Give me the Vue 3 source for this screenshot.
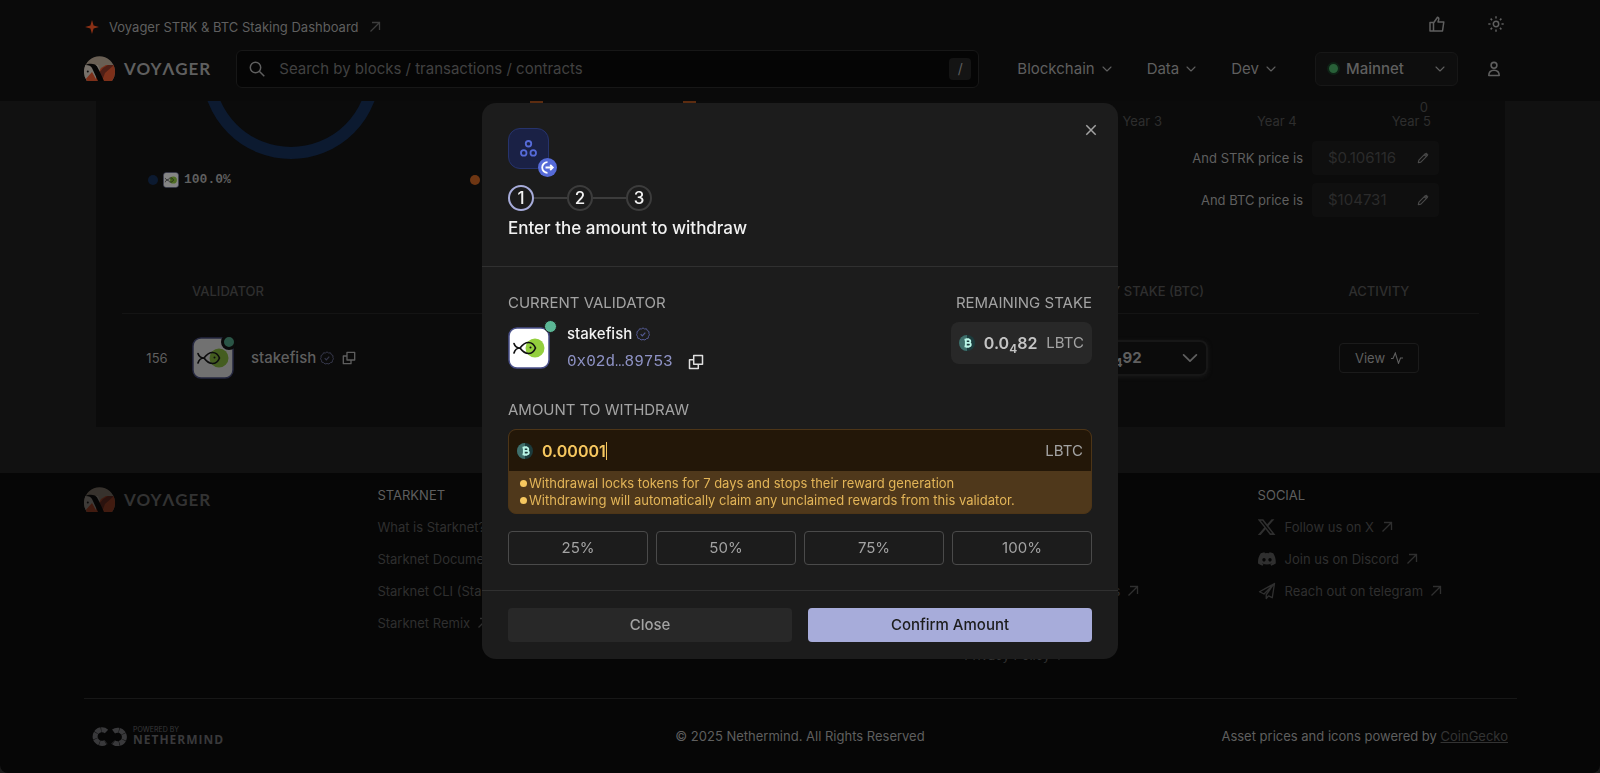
<script setup>
import { ref } from 'vue'

const search = ref('')
const network = ref('Mainnet')
const strkPrice = ref('$0.106116')
const btcPrice = ref('$104731')
const amount = ref('0.00001')
const showModal = ref(true)

const remaining = 0.000082

const menus = ['Blockchain', 'Data', 'Dev']
const years = ['Year 2', 'Year 3', 'Year 4', 'Year 5']
const steps = [1, 2, 3]
const percents = [25, 50, 75, 100]

const columns = [
  {
    title: 'STARKNET',
    links: ['What is Starknet?', 'Starknet Documentation', 'Starknet CLI (Starkli)', 'Starknet Remix'],
  },
  { title: 'VOYAGER', links: ['About us', 'Roadmap', 'Changelog', 'Contact'] },
  { title: 'RESOURCES', links: ['API', 'Verify', 'Starknet Token Contracts', 'Brand', 'Privacy Policy'] },
]

const socials = [
  { icon: '#i-x', text: 'Follow us on X' },
  { icon: '#i-discord', text: 'Join us on Discord' },
  { icon: '#i-telegram', text: 'Reach out on telegram' },
]

// fill the amount with a part of the stake that is left
const setPercent = (p) => {
  amount.value = String((remaining * p) / 100)
}
</script>

<template>
  <!-- all the icons that are used more than once -->
  <svg class="sprite" aria-hidden="true">
    <symbol id="i-arrow" viewBox="0 0 12 12">
      <path d="M1.5 10.5 10.3 1.7M3 1.5h7.5V9" fill="none" stroke="currentColor" stroke-width="1.3" />
    </symbol>
    <symbol id="i-down" viewBox="0 0 12 12">
      <path d="M1.2 3.6 6 8.4l4.8-4.8" fill="none" stroke="currentColor" stroke-width="1.3" stroke-linecap="round" stroke-linejoin="round" />
    </symbol>
    <symbol id="i-copy" viewBox="0 0 16 16">
      <path d="M5.7 1.5h8.8v8.8H5.7zM5.5 5.7h-4v8.8h8.8v-4" fill="none" stroke="currentColor" stroke-width="1.5" stroke-linejoin="round" />
    </symbol>
    <symbol id="i-check" viewBox="0 0 14 14">
      <path d="M7 .9 8.6 2l1.9-.2.8 1.8 1.7 1-.1 1.9.6 1.3-1 1.5-.3 1.9-1.9.5L9 13l-2-.5L5 13l-1.3-1.3-1.9-.5-.3-1.9-1-1.5.6-1.3L1 4.6l1.7-1 .8-1.8 1.9.2z" fill="none" stroke="currentColor" stroke-width="1" />
      <path d="m4.7 7.2 1.6 1.6 3-3.2" fill="none" stroke="currentColor" stroke-width="1.2" />
    </symbol>
    <symbol id="i-fish" viewBox="0 0 42 42">
      <rect x="1" y="1" width="40" height="40" rx="8" fill="#fff" stroke="#4a508a" stroke-width="1.5" />
      <circle cx="27" cy="21" r="9.5" fill="#93cf3d" />
      <path d="M6 16.5c1 3 3 4.5 6 4.5 3-4 6-5.5 8.5-5.5 3.5 0 6 3 7 5.5-1 2.5-3.5 5.5-7 5.500-2.5 0-5.5-1.5-8.5-5.500-3 0-5 1.5-6 5" fill="none" stroke="#111" stroke-width="1.7" stroke-linecap="round" stroke-linejoin="round" />
      <circle cx="22.5" cy="20.5" r="1" fill="#111" />
    </symbol>
    <symbol id="i-btc" viewBox="0 0 16 16">
      <circle cx="8" cy="8" r="8" fill="#1c3b3c" />
      <path d="M8 0a8 8 0 0 0 0 16z" fill="#3f6f6b" />
      <path d="M5.5 4.7h4.2a1.6 1.6 0 0 1 0 3.2H6.8h3.3a1.7 1.7 0 0 1 0 3.4H5.5M6.8 4.7v6.6M7.6 3.2v1.5M9.4 3.2v1.5M7.6 11.3v1.5M9.4 11.3v1.5" fill="none" stroke="#b9f5e6" stroke-width="1.8" />
    </symbol>
    <symbol id="i-pencil" viewBox="0 0 14 14">
      <path d="M1.5 12.5 2.2 9.5 9.7 2 12 4.3 4.5 11.8zM8.5 3.2l2.3 2.3" fill="none" stroke="currentColor" stroke-width="1.3" stroke-linejoin="round" />
      <path d="M10 2.2 11 1.3l1.8 1.8-1 1z" fill="currentColor" stroke="currentColor" />
    </symbol>
    <symbol id="i-voyager" viewBox="0 0 31 25">
      <clipPath id="disc"><path d="M3 25A15.5 15.5 0 1 1 28 25z" /></clipPath>
      <g clip-path="url(#disc)">
        <rect width="31" height="25" fill="#695f54" />
        <path d="M0 9h14l6 16H0z" fill="#77716a" />
        <path d="M0 25 8 16l5 9z" fill="#7d301a" />
        <path d="m12 21 5-9 5-3h9v16H12z" fill="#7d301a" />
        <path d="m15 17 4-5 5-3h6l-9 8-3 8z" fill="#4e1f16" />
        <path d="M1.5 9C4 7.5 8 7.3 11 8.5c3 2 4 6 6.5 11L20 25h-6L8 12C7 10 5 9 1.5 9z" fill="#050505" />
        <circle cx="3.8" cy="15.5" r="1" fill="#111" />
      </g>
    </symbol>
    <symbol id="i-x" viewBox="0 0 24 24">
      <path fill="currentColor" d="M18.2 1.5h3.7l-8 9.2L23.3 22.5h-7.4l-5.8-7.6-6.6 7.6H-.2l8.6-9.8L-.6 1.5H7l5.2 6.9zm-1.3 18.900h2L5.8 3.5H3.6z" />
    </symbol>
    <symbol id="i-discord" viewBox="0 0 24 24">
      <path fill="currentColor" d="M20.3 4.4A19.8 19.8 0 0 0 15.4 2.9l-.7 1.3a18.3 18.3 0 0 0-5.5 0l-.6-1.3a19.7 19.7 0 0 0-4.9 1.5C.5 9-.3 13.6.1 18.1a19.9 19.9 0 0 0 6 3l1.2-2-1.9-.9.4-.3c3.9 1.8 8.2 1.8 12.1 0l.4.3-1.9.9 1.2 2a19.8 19.8 0 0 0 6-3c.5-5.2-.8-9.7-3.3-13.7zM8 15.3c-1.2 0-2.2-1.1-2.2-2.4S6.8 10.5 8 10.5s2.2 1.1 2.2 2.4S9.2 15.3 8 15.3zm8 0c-1.2 0-2.2-1.1-2.2-2.4s1-2.4 2.2-2.4 2.2 1.1 2.2 2.4-1 2.4-2.2 2.4z" />
    </symbol>
    <symbol id="i-telegram" viewBox="0 0 24 24">
      <path d="M22 2 2 13l6 3 12-12L11 17v5l3-3.5 5 2.5z" fill="none" stroke="currentColor" stroke-width="1.8" stroke-linejoin="round" />
    </symbol>
  </svg>

  <div class="page">
    <header class="header">
      <div class="top-row">
        <a href="#" class="promo">
          <svg width="14" height="14" viewBox="0 0 14 14"><path d="M7 0 8.6 5.4 14 7 8.6 8.6 7 14 5.4 8.6 0 7 5.4 5.4z" fill="#8a3015" /></svg>
          <span>Voyager STRK &amp; BTC Staking Dashboard</span>
          <svg class="dim" width="12" height="12"><use href="#i-arrow" /></svg>
        </a>
        <div class="top-icons">
          <button type="button" aria-label="Feedback">
            <svg width="16" height="16" viewBox="0 0 16 16" fill="none" stroke="currentColor" stroke-width="1.5" stroke-linejoin="round">
              <path d="M1 6.5h3.5V15H1zM4.5 7 8.5 1.2c1.3.5 1.5 1.4 1.2 2.4L9 6h5.8L13.5 15h-9" />
            </svg>
          </button>
          <button type="button" aria-label="Theme">
            <svg width="16" height="16" viewBox="0 0 16 16" fill="none" stroke="currentColor" stroke-width="1.5">
              <circle cx="8" cy="8" r="2.7" />
              <path d="M8 .3v2.2M8 13.5v2.2M.3 8h2.2M13.5 8h2.2M2.6 2.6l1.5 1.5M11.9 11.9l1.5 1.5M2.6 13.4l1.5-1.5M11.9 4.1l1.5-1.5" />
            </svg>
          </button>
        </div>
      </div>
      <div class="nav-row">
        <a href="#" class="logo" aria-label="Voyager">
          <svg width="31" height="25"><use href="#i-voyager" /></svg>
          <span>VOYΛGER</span>
        </a>
        <label class="search">
          <svg width="16" height="16" viewBox="0 0 16 16" fill="none" stroke="currentColor" stroke-width="1.5">
            <circle cx="6.5" cy="6.5" r="5.2" />
            <path d="m10.3 10.3 5 5" />
          </svg>
          <input v-model="search" type="text" placeholder="Search by blocks / transactions / contracts" />
          <kbd>/</kbd>
        </label>
        <nav class="menus">
          <button v-for="menu in menus" :key="menu" type="button">
            {{ menu }}
            <svg width="10" height="10"><use href="#i-down" /></svg>
          </button>
        </nav>
        <label class="network">
          <span class="network-dot"></span>
          <select v-model="network" aria-label="Network">
            <option>Mainnet</option>
            <option>Sepolia</option>
          </select>
          <svg width="10" height="10"><use href="#i-down" /></svg>
        </label>
        <button type="button" class="account" aria-label="Account">
          <svg width="14" height="16" viewBox="0 0 14 16" fill="none" stroke="currentColor" stroke-width="1.6">
            <circle cx="7" cy="4.3" r="2.9" />
            <path d="M1.8 14.5c0-3.6 1.7-5.3 5.2-5.3s5.2 1.7 5.2 5.3z" stroke-linejoin="round" />
          </svg>
        </button>
      </div>
    </header>

    <main class="main">
      <section class="card">
        <div class="overview">
          <div class="pie">
            <svg width="180" height="60" viewBox="0 0 180 60"><circle cx="90" cy="-31" r="83" fill="none" stroke="#0c1a30" stroke-width="12" /></svg>
            <p class="legend">
              <span class="dot blue"></span>
              <svg width="16" height="16"><use href="#i-fish" /></svg>
              100.0%
            </p>
          </div>
          <div class="bars">
            <svg width="240" height="60" viewBox="0 0 240 60" fill="#5c2c10"><path d="M60 0h13v3H60zM213 0h13v3h-13z" /></svg>
            <p class="legend"><span class="dot orange"></span></p>
          </div>
          <div class="forecast">
            <p class="zero">0</p>
            <p class="years"><span v-for="year in years" :key="year">{{ year }}</span></p>
            <div class="price">
              <span class="stub"></span>
              <label for="strk">And STRK price is</label>
              <span class="price-box">
                <input id="strk" v-model="strkPrice" type="text" />
                <svg width="12" height="12"><use href="#i-pencil" /></svg>
              </span>
            </div>
            <div class="price">
              <span class="stub"></span>
              <label for="btc">And BTC price is</label>
              <span class="price-box">
                <input id="btc" v-model="btcPrice" type="text" />
                <svg width="12" height="12"><use href="#i-pencil" /></svg>
              </span>
            </div>
          </div>
        </div>

        <table class="validators">
          <thead>
            <tr>
              <th class="rank"></th>
              <th>VALIDATOR</th>
              <th class="stake">MY STAKE (BTC)</th>
              <th class="activity">ACTIVITY</th>
            </tr>
          </thead>
          <tbody>
            <tr>
              <td class="rank">156</td>
              <td>
                <div class="validator">
                  <span class="avatar faded">
                    <svg width="42" height="42"><use href="#i-fish" /></svg>
                    <i class="status"></i>
                  </span>
                  <span class="name">stakefish</span>
                  <svg class="badge" width="14" height="14"><use href="#i-check" /></svg>
                  <svg width="14" height="14"><use href="#i-copy" /></svg>
                </div>
              </td>
              <td class="stake">
                <button type="button" class="stake-select">
                  <strong>0.0<sub>4</sub>92</strong>
                  <svg width="16" height="16"><use href="#i-down" /></svg>
                </button>
              </td>
              <td class="activity">
                <button type="button" class="view">
                  View
                  <svg width="12" height="12" viewBox="0 0 12 12" fill="none" stroke="currentColor" stroke-width="1.1"><path d="M0 6.5h2L4.3 1 7.5 11.3 9.5 6H12" /></svg>
                </button>
              </td>
            </tr>
          </tbody>
        </table>
      </section>
    </main>

    <footer class="footer">
      <div class="footer-grid">
        <a href="#" class="logo faded-logo" aria-label="Voyager">
          <svg width="31" height="25"><use href="#i-voyager" /></svg>
          <span>VOYΛGER</span>
        </a>
        <div v-for="col in columns" :key="col.title" class="footer-col">
          <h4>{{ col.title }}</h4>
          <a v-for="link in col.links" :key="link" href="#">
            {{ link }}
            <svg width="12" height="12"><use href="#i-arrow" /></svg>
          </a>
        </div>
        <div class="footer-col social">
          <h4>SOCIAL</h4>
          <a v-for="item in socials" :key="item.text" href="#">
            <svg class="brand" width="18" height="18"><use :href="item.icon" /></svg>
            {{ item.text }}
            <svg width="12" height="12"><use href="#i-arrow" /></svg>
          </a>
        </div>
      </div>
      <div class="footer-bottom">
        <div class="nethermind">
          <svg width="36" height="19" viewBox="0 0 36 19" fill="none" stroke="#39393b" stroke-width="5">
            <path d="M14.5 4.5A6.8 6.8 0 1 0 14 15" stroke-dasharray="5.5 .4" />
            <path d="M21.5 4.5A6.8 6.8 0 1 1 21 15" stroke-dasharray="5.5 .4" />
          </svg>
          <div>
            <small>POWERED BY</small>
            <b>NETHERMIND</b>
          </div>
        </div>
        <p>© 2025 Nethermind. All Rights Reserved</p>
        <p class="credits">Asset prices and icons powered by <a href="#">CoinGecko</a></p>
      </div>
    </footer>
  </div>

  <div v-if="showModal" class="overlay">
    <div class="modal" role="dialog" aria-labelledby="modal-title">
      <div class="modal-head">
        <button type="button" class="close-x" aria-label="Close" @click="showModal = false">
          <svg width="12" height="12" viewBox="0 0 12 12"><path d="m1.3 1.3 9.4 9.4M10.7 1.3l-9.4 9.4" stroke="currentColor" stroke-width="1.5" /></svg>
        </button>
        <div class="action-icon">
          <svg width="19" height="19" viewBox="0 0 20 20" fill="none" stroke="#566bd8" stroke-width="1.9">
            <circle cx="10" cy="5" r="2.9" />
            <circle cx="5" cy="14.7" r="2.9" />
            <circle cx="15" cy="14.7" r="2.9" />
          </svg>
          <span class="action-badge">
            <svg width="19" height="19" viewBox="0 0 19 19" fill="none" stroke="#fff" stroke-width="1.8">
              <path d="M9.5 4.2a5.3 5.3 0 1 0 0 10.6" />
              <path d="M7.5 9.5h7M12.2 6.9l2.6 2.6-2.6 2.6" />
            </svg>
          </span>
        </div>
        <ol class="steps">
          <li v-for="step in steps" :key="step" :class="{ active: step === 1 }">{{ step }}</li>
        </ol>
        <h2 id="modal-title">Enter the amount to withdraw</h2>
      </div>

      <div class="modal-body">
        <div class="stake-row">
          <div>
            <h3>CURRENT VALIDATOR</h3>
            <div class="current">
              <span class="avatar">
                <svg width="42" height="42"><use href="#i-fish" /></svg>
                <i class="status"></i>
              </span>
              <div>
                <p class="current-name">
                  stakefish
                  <svg class="badge" width="14" height="14"><use href="#i-check" /></svg>
                </p>
                <p class="address">
                  0x02d…89753
                  <button type="button" aria-label="Copy address"><svg width="16" height="16"><use href="#i-copy" /></svg></button>
                </p>
              </div>
            </div>
          </div>
          <div class="remaining">
            <h3>REMAINING STAKE</h3>
            <p class="remaining-box">
              <svg width="16" height="16"><use href="#i-btc" /></svg>
              <strong>0.0<sub>4</sub>82</strong>
              <span>LBTC</span>
            </p>
          </div>
        </div>

        <label class="amount-label" for="amount">AMOUNT TO WITHDRAW</label>
        <div class="amount">
          <div class="amount-field">
            <svg width="16" height="16"><use href="#i-btc" /></svg>
            <input id="amount" v-model="amount" type="text" />
            <span class="caret"></span>
            <span class="unit">LBTC</span>
          </div>
          <ul class="notes">
            <li>Withdrawal locks tokens for 7 days and stops their reward generation</li>
            <li>Withdrawing will automatically claim any unclaimed rewards from this validator.</li>
          </ul>
        </div>
        <div class="percents">
          <button v-for="p in percents" :key="p" type="button" @click="setPercent(p)">{{ p }}%</button>
        </div>
      </div>

      <div class="modal-foot">
        <button type="button" class="close" @click="showModal = false">Close</button>
        <button type="button" class="confirm">Confirm Amount</button>
      </div>
    </div>
  </div>
</template>

<style>
body {
  background-color: #1a1a1a;
}
</style>

<style scoped>
.page,
.overlay {
  font-family: Inter, "Liberation Sans", sans-serif;
  font-size: 14px;
  line-height: 20px;
}

.page {
  display: flex;
  flex-direction: column;
  min-height: 100vh;
  color: #5f5f5f;
}

.sprite {
  position: absolute;
  width: 0;
  height: 0;
}

svg {
  display: block;
  flex-shrink: 0;
}

p,
h2,
h3,
h4,
ul,
ol {
  margin: 0;
  padding: 0;
  font-size: inherit;
  font-weight: 400;
  list-style: none;
}

button,
input,
select {
  margin: 0;
  padding: 0;
  border: none;
  outline: none;
  background: none;
  color: inherit;
  font: inherit;
}

button {
  cursor: pointer;
}

a {
  color: inherit;
  text-decoration: none;
}

/* header */
.header {
  box-sizing: border-box;
  height: 101px;
  padding: 16px 83px 0 84px;
  background-color: #0a0a0a;
}

.top-row {
  display: flex;
  justify-content: space-between;
  height: 22px;
}

.promo {
  display: flex;
  align-items: center;
  gap: 10px;
  padding: 0 1px;
  font-size: 13px;
}

.dim {
  color: #3d3d3d;
}

.top-icons {
  display: flex;
  align-items: flex-start;
  gap: 43px;
  margin-right: 13px;
}

.nav-row {
  display: flex;
  align-items: center;
  height: 61px;
}

.logo {
  display: flex;
  align-items: center;
  gap: 9px;
  font-family: Lato, sans-serif;
  font-size: 17px;
  font-weight: 700;
  letter-spacing: 1px;
}

.search {
  flex: 1;
  display: flex;
  align-items: center;
  gap: 14px;
  box-sizing: border-box;
  height: 38px;
  margin-left: 25px;
  padding: 0 7px 0 12px;
  border: 1px solid #171717;
  border-radius: 6px;
  background-color: #050505;
  font-size: 15px;
}

.search input {
  flex: 1;
}

.search input::placeholder {
  color: #414141;
}

.search kbd {
  width: 22px;
  border-radius: 4px;
  background-color: #141414;
  font-family: inherit;
  font-size: 14px;
  line-height: 22px;
  text-align: center;
}

.menus {
  display: flex;
  gap: 35px;
  margin-left: 38px;
  font-size: 15px;
}

.menus button {
  display: flex;
  align-items: center;
  gap: 7px;
}

.network {
  display: flex;
  align-items: center;
  box-sizing: border-box;
  width: 143px;
  height: 34px;
  margin-left: 39px;
  padding: 0 12px 0 11px;
  border: 1px solid #171717;
  border-radius: 6px;
  background-color: #0e0e0e;
  font-size: 15px;
  font-weight: 500;
}

.network select {
  flex: 1;
  appearance: none;
}

.network-dot {
  width: 9px;
  height: 9px;
  margin-right: 6px;
  border: 2px solid #0f2216;
  border-radius: 50%;
  background-color: #286038;
}

.account {
  margin: 0 16px 0 29px;
}

/* validators card */
.main {
  padding: 0 95px 46px 96px;
  background-color: #111;
}

.card {
  padding: 0 26px;
  background-color: #0b0b0b;
}

.overview {
  display: grid;
  grid-template-columns: 338px 240px 1fr;
  gap: 10px;
  height: 168px;
}

.pie > svg {
  margin: 0 auto;
}

.legend {
  display: flex;
  align-items: center;
  gap: 5px;
  height: 38px;
  font-family: "Liberation Mono", monospace;
  font-size: 13px;
  font-weight: 700;
}

.pie .legend {
  padding-left: 26px;
}

.legend > svg {
  opacity: 0.5;
}

.dot {
  width: 10px;
  height: 10px;
  border-radius: 50%;
}

.blue {
  background-color: #0c1a30;
}

.orange {
  background-color: #6e3613;
}

.forecast {
  padding-right: 40px;
  font-size: 13px;
}

.zero {
  padding-right: 11px;
  color: #2e2e2e;
  line-height: 13px;
  text-align: right;
}

.years {
  display: flex;
  justify-content: flex-end;
  gap: 95px;
  padding: 0 8px 12px 0;
  color: #2e2e2e;
  line-height: 15px;
  white-space: nowrap;
}

.price {
  display: flex;
  align-items: center;
  justify-content: flex-end;
  gap: 9px;
  margin-bottom: 8px;
}

.stub {
  width: 120px;
  height: 34px;
  margin-right: auto;
  border-radius: 4px;
  background-color: #0f0f0f;
}

.price-box {
  display: flex;
  align-items: center;
  box-sizing: border-box;
  width: 127px;
  height: 34px;
  padding: 0 10px 0 16px;
  border-radius: 4px;
  background-color: #0f0f0f;
  color: #4a4a4a;
}

.price-box input {
  flex: 1;
  min-width: 0;
  color: #2b2b2b;
  font-size: 15px;
}

.validators {
  width: 100%;
  border-collapse: collapse;
}

.validators th,
.validators td {
  padding: 0;
  border-bottom: 1px solid #141414;
  text-align: left;
}

.validators th {
  height: 44px;
  color: #2f2f2f;
  font-size: 13px;
  font-weight: 500;
}

.validators td {
  height: 87px;
}

.validators tbody {
  border-bottom: 26px solid transparent;
}

.validators .rank {
  width: 70px;
  font-size: 13px;
  text-align: center;
}

.validators .stake {
  width: 128px;
  padding-right: 71px;
}

.validators th.stake {
  padding-right: 75px;
  text-align: right;
}

.validators .activity {
  width: 200px;
  text-align: center;
}

.validator {
  display: flex;
  align-items: center;
  gap: 8px;
}

.name {
  margin-left: 9px;
  font-size: 15px;
  font-weight: 500;
}

.validator .badge {
  margin-left: -4px;
  color: #35374a;
}

.avatar {
  position: relative;
}

.status {
  position: absolute;
  top: -7px;
  right: -7px;
  width: 11px;
  height: 11px;
  border: 1px solid #1c1c1c;
  border-radius: 50%;
  background-color: #5bb795;
}

.faded > svg {
  opacity: 0.42;
}

.faded .status {
  top: -3px;
  right: -3px;
  width: 10px;
  height: 10px;
  border: 3px solid #0b0b0b;
  background-color: #2a5546;
}

.stake-select {
  display: flex;
  align-items: center;
  justify-content: space-between;
  box-sizing: border-box;
  width: 128px;
  height: 36px;
  margin-left: auto;
  padding: 0 8px;
  border: 2px solid #171717;
  border-radius: 8px;
  box-shadow: 0 1px 4px #191919;
  font-size: 15px;
}

.view {
  display: inline-flex;
  align-items: center;
  gap: 6px;
  box-sizing: border-box;
  height: 30px;
  padding: 0 15px;
  border: 1px solid #1b1b1b;
  border-radius: 4px;
  font-size: 13px;
}

/* footer */
.footer {
  flex: 1;
  padding: 12px 83px 0 84px;
  border-radius: 0 0 8px 8px;
  background-color: #060606;
}

.footer-grid {
  display: grid;
  grid-template-columns: repeat(5, 1fr);
  align-items: start;
  gap: 34px;
  height: 213px;
  border-bottom: 1px solid #171717;
}

.faded-logo {
  height: 29px;
  opacity: 0.5;
}

.footer-col {
  font-size: 13px;
  white-space: nowrap;
}

.footer-col h4 {
  margin-bottom: 12px;
}

.footer-col a {
  display: flex;
  align-items: center;
  gap: 7px;
  height: 20px;
  margin-bottom: 12px;
  color: #2f2f2f;
}

.brand {
  margin-right: 2px;
}

.footer-bottom {
  display: grid;
  grid-template-columns: 1fr auto 1fr;
  align-items: center;
  height: 74px;
  padding: 0 9px 0 8px;
  font-size: 13px;
}

.nethermind {
  display: flex;
  align-items: center;
  gap: 5px;
  color: #39393b;
}

.nethermind small,
.nethermind b {
  display: block;
}

.nethermind small {
  font-size: 7px;
  line-height: 7px;
}

.nethermind b {
  font-family: "Open Sans", sans-serif;
  font-size: 12px;
  letter-spacing: 1px;
  line-height: 13px;
}

.credits {
  text-align: right;
}

.credits a {
  color: #333;
  text-decoration: underline;
}

/* modal */
.overlay {
  position: fixed;
  inset: 0;
  display: flex;
  justify-content: center;
  align-items: center;
  padding-bottom: 11px;
}

.modal {
  position: relative;
  width: 636px;
  border-radius: 14px;
  background-color: #1c1c1c;
  color: #a3a3a3;
  font-size: 15px;
}

.modal-head {
  padding: 25px 26px 27px;
  border-bottom: 1px solid #303030;
}

.close-x {
  position: absolute;
  top: 21px;
  right: 21px;
}

.action-icon {
  position: relative;
  display: flex;
  align-items: center;
  justify-content: center;
  box-sizing: border-box;
  width: 41px;
  height: 41px;
  border: 1px solid #26336c;
  border-radius: 12px;
  background-color: #1a2145;
}

.action-badge {
  position: absolute;
  right: -9px;
  bottom: -9px;
  border-radius: 50%;
  background-color: #566bd8;
}

.steps {
  display: flex;
  gap: 33px;
  margin: 16px 0 6px;
}

.steps li {
  position: relative;
  box-sizing: border-box;
  width: 26px;
  height: 26px;
  border: 2px solid #3c3c3c;
  border-radius: 50%;
  color: #f2f2f2;
  font-size: 17px;
  font-weight: 500;
  line-height: 22px;
  text-align: center;
}

.steps .active {
  border-color: #a7acda;
}

/* line between two steps */
.steps li + li::before {
  content: "";
  position: absolute;
  top: 10px;
  right: 24px;
  width: 33px;
  height: 2px;
  background-color: #3c3c3c;
}

h2 {
  color: #f2f2f2;
  font-size: 17px;
  font-weight: 500;
  line-height: 22px;
}

.modal-body {
  padding: 26px 26px 25px;
}

.stake-row {
  display: flex;
  justify-content: space-between;
  margin-bottom: 28px;
}

.current {
  display: flex;
  gap: 17px;
  margin-top: 11px;
}

.avatar {
  align-self: center;
}

.current-name {
  display: flex;
  align-items: center;
  gap: 4px;
  color: #f2f2f2;
  font-weight: 500;
}

.current-name .badge {
  color: #555b94;
}

.address {
  display: flex;
  align-items: center;
  gap: 15px;
  margin-top: 8px;
  color: #8e92c4;
  font-family: "Liberation Mono", monospace;
  font-size: 16px;
}

.address button {
  color: #e0e0e0;
}

.remaining {
  display: flex;
  flex-direction: column;
  align-items: flex-end;
}

.remaining-box {
  display: flex;
  align-items: center;
  gap: 9px;
  height: 42px;
  margin-top: 9px;
  padding: 0 8px;
  border-radius: 8px;
  background-color: #282828;
}

.remaining-box strong {
  color: #c4c4c4;
  font-size: 16px;
  font-weight: 600;
}

sub {
  font-size: 12px;
  line-height: 0;
}

.amount-label {
  display: block;
  margin-bottom: 9px;
}

.amount {
  overflow: hidden;
  border: 1px solid #4d3517;
  border-radius: 8px;
  background-color: #4f381b;
  color: #f6c75f;
}

.amount-field {
  display: flex;
  align-items: center;
  height: 41px;
  padding: 0 8px;
  background-color: #231708;
  font-size: 16px;
  font-weight: 600;
}

.amount-field input {
  field-sizing: content;
  margin-left: 9px;
}

.caret {
  width: 1px;
  height: 18px;
  background-color: #f6c75f;
}

.unit {
  margin-left: auto;
  color: #a3a3a3;
  font-size: 15px;
  font-weight: 400;
}

.notes {
  padding: 4px 11px;
  color: #e3b558;
  font-size: 13px;
  line-height: 17px;
}

.notes li {
  display: flex;
  align-items: center;
  gap: 2px;
}

.notes li::before {
  content: "";
  width: 7px;
  height: 7px;
  border-radius: 50%;
  background-color: #f6c75f;
}

.percents {
  display: grid;
  grid-template-columns: repeat(4, 1fr);
  gap: 8px;
  margin-top: 17px;
}

.percents button {
  height: 34px;
  border: 1px solid #4a4a4a;
  border-radius: 4px;
}

.modal-foot {
  display: grid;
  grid-template-columns: 1fr 1fr;
  gap: 16px;
  padding: 17px 26px;
  border-top: 1px solid #303030;
}

.modal-foot button {
  height: 34px;
  border-radius: 4px;
  font-weight: 500;
}

.close {
  background-color: #282828;
}

.confirm {
  background-color: #a7acda;
  color: #1c1c1c;
}
</style>
